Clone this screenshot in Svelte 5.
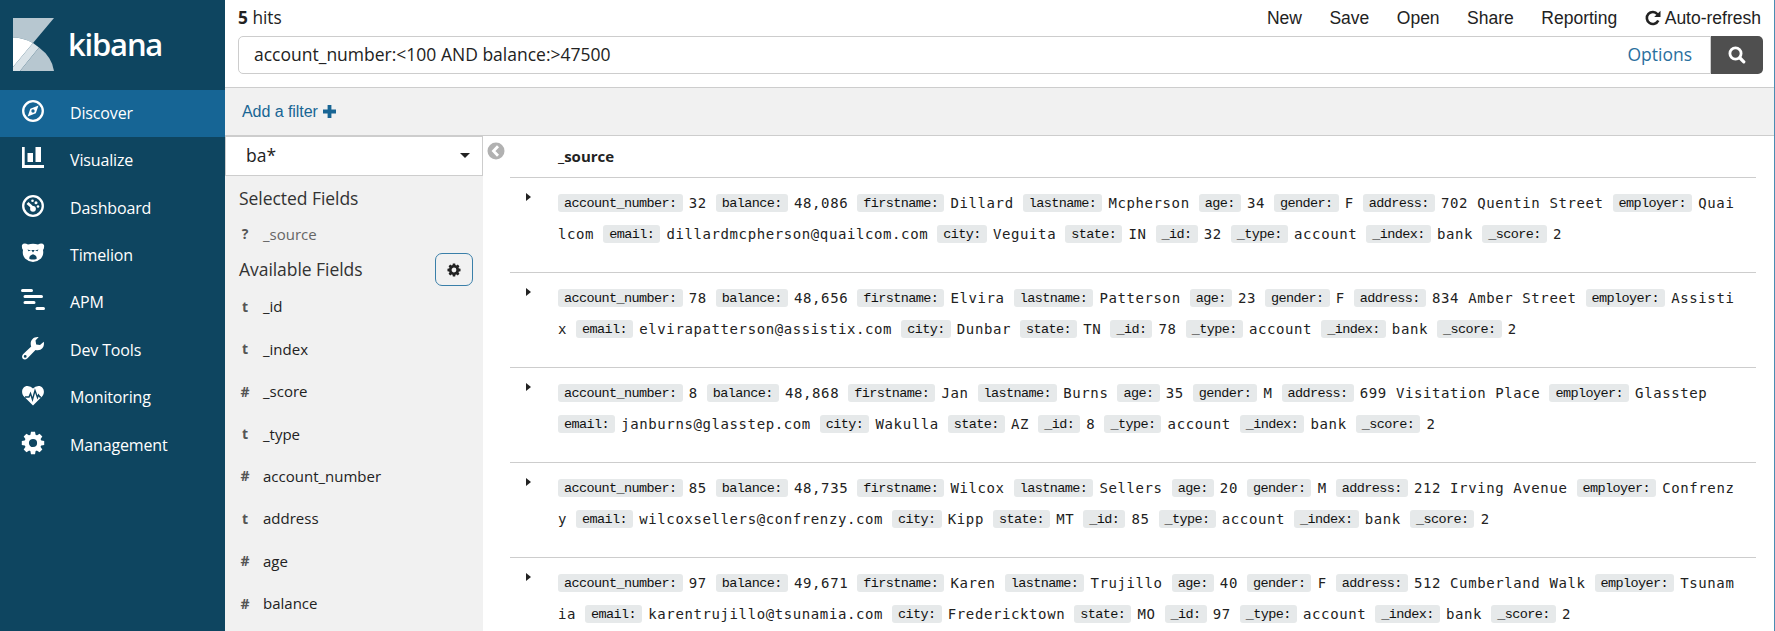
<script>
  const nav = [
    { label: 'Discover', icon: 'compass', active: true },
    { label: 'Visualize', icon: 'bars' },
    { label: 'Dashboard', icon: 'dash' },
    { label: 'Timelion', icon: 'bear' },
    { label: 'APM', icon: 'apm' },
    { label: 'Dev Tools', icon: 'wrench' },
    { label: 'Monitoring', icon: 'heart' },
    { label: 'Management', icon: 'gear' }
  ];
  const menu = ['New', 'Save', 'Open', 'Share', 'Reporting'];
  const fields = [
    ['t', '_id'], ['t', '_index'], ['#', '_score'], ['t', '_type'],
    ['#', 'account_number'], ['t', 'address'], ['#', 'age'], ['#', 'balance']
  ];
  // Each hit is two lines of [key, value] pairs; an empty key continues a wrapped value.
  const hit = (n, bal, first, last, age, g, addr, emp, rest, email, city, state) => [
    [['account_number:', n], ['balance:', bal], ['firstname:', first], ['lastname:', last], ['age:', age],
      ['gender:', g], ['address:', addr], ['employer:', emp]],
    [...(rest ? [['', rest]] : []), ['email:', email], ['city:', city], ['state:', state], ['_id:', n],
      ['_type:', 'account'], ['_index:', 'bank'], ['_score:', '2']]
  ];
  const hits = [
    hit('32', '48,086', 'Dillard', 'Mcpherson', '34', 'F', '702 Quentin Street', 'Quai', 'lcom', 'dillardmcpherson@quailcom.com', 'Veguita', 'IN'),
    hit('78', '48,656', 'Elvira', 'Patterson', '23', 'F', '834 Amber Street', 'Assisti', 'x', 'elvirapatterson@assistix.com', 'Dunbar', 'TN'),
    hit('8', '48,868', 'Jan', 'Burns', '35', 'M', '699 Visitation Place', 'Glasstep', '', 'janburns@glasstep.com', 'Wakulla', 'AZ'),
    hit('85', '48,735', 'Wilcox', 'Sellers', '20', 'M', '212 Irving Avenue', 'Confrenz', 'y', 'wilcoxsellers@confrenzy.com', 'Kipp', 'MT'),
    hit('97', '49,671', 'Karen', 'Trujillo', '40', 'F', '512 Cumberland Walk', 'Tsunam', 'ia', 'karentrujillo@tsunamia.com', 'Fredericktown', 'MO')
  ];
  const teeth = [0, 45, 90, 135, 180, 225, 270, 315];
</script>

{#snippet gear()}
  <circle cx="12" cy="12" r="6.3" fill="none" stroke="currentColor" stroke-width="4.4" />
  {#each teeth as a}
    <path d="M9.2 5 L10 .8 H14 L14.8 5Z" fill="currentColor" transform="rotate({a} 12 12)" />
  {/each}
{/snippet}

<div class="app">
  <nav>
    <div class="brand">
      <svg width="41" height="53" viewBox="0 0 41 53">
        <path d="M0 0H41L20 25Q10 19.500 0 19.500Z" fill="#b7c7d0" />
        <path d="M0 19.500Q10 19.500 20 25L0 49Z" fill="#fff" />
        <path d="M20 25L26 29.500L7 53H0V49Z" fill="#dae3e8" />
        <path d="M26 29.500Q39 39 41 53H7Z" fill="#b7c7d0" />
      </svg>
      <span>kibana</span>
    </div>
    {#each nav as item}
      <div class="item" class:active={item.active}>
        <svg width="24" height="24" viewBox="0 0 24 24">
          {#if item.icon === 'compass'}
            <circle cx="12" cy="12" r="9.800" fill="none" stroke="#fff" stroke-width="2.300" />
            <path fill="#fff" fill-rule="evenodd" d="M17.500 6.500L14.800 14.200L6.700 17.600L9.300 9.800ZM12 10.300A1.700 1.700 0 1 0 12 13.700A1.700 1.700 0 1 0 12 10.300Z" />
          {:else if item.icon === 'bars'}
            <path fill="#fff" d="M1 1H3.700V19H23V22H1ZM6.500 7H12V16H6.500ZM14.500 1H20V16H14.500Z" />
          {:else if item.icon === 'dash'}
            <circle cx="12" cy="12" r="9.800" fill="none" stroke="#fff" stroke-width="2.300" />
            <circle cx="12" cy="14.800" r="2.900" fill="#fff" />
            <path d="M6.500 9L12 14" stroke="#fff" stroke-width="2.800" />
            <circle cx="11.500" cy="6.800" r="1.300" fill="#fff" />
            <circle cx="15" cy="8.800" r="1.500" fill="#fff" />
            <circle cx="17" cy="12.500" r="1.300" fill="#fff" />
          {:else if item.icon === 'bear'}
            <path fill="#fff" d="M1 4Q3 1.500 7 3.500Q12 2 17 3.500Q21 1.500 23 4Q23.500 7 22 9Q23 14 20 17.500Q16 21 12 21Q8 21 4 17.500Q1 14 2 9Q.500 7 1 4Z" />
            <path fill="#0e4560" d="M6.500 8.500L10 9.500L7.500 10.300ZM17.500 8.500L14 9.500L16.500 10.300ZM10.300 9H13.700L12 11.500ZM12 13.300Q16.500 15 15.500 18Q12 19 8.500 18Q7.500 15 12 13.300Z" />
          {:else if item.icon === 'apm'}
            <path stroke="#fff" stroke-width="3" stroke-linecap="round" d="M1.500 2.500H10.500M4 8.500H20.500M4 14.500H13M16 20.500H22.500" />
          {:else if item.icon === 'wrench'}
            <path fill="#fff" fill-rule="evenodd" d="M17.700 1L14.500 4.500L15.200 8.500L19 9L22.800 5.700C23.800 11 20.500 15.500 14.500 14L6.500 22.300C2.800 25.500-.700 21.500 2 18.300L10.200 10.500C8.300 5 12 .300 17.700 1ZM4.200 19A1.400 1.400 0 1 0 4.200 21.800A1.400 1.400 0 1 0 4.200 19Z" />
          {:else if item.icon === 'heart'}
            <path fill="#fff" d="M12 22.500L2.500 13C-.500 9 1.500 3 6.500 3Q10 3 12 5.500Q14 3 17.500 3C22.500 3 24.500 9 21.500 13Z" />
            <path fill="none" stroke="#0e4560" stroke-width="1.400" d="M4 14H8L9.500 10.500L11.500 16.500L14 7.500L16.500 14.500L17.500 12L19 14H20" />
          {:else}
            {@render gear()}
          {/if}
        </svg>
        <span>{item.label}</span>
      </div>
    {/each}
  </nav>

  <main>
    <header>
      <div class="top">
        <div class="hits"><b>5</b> hits</div>
        <div class="menu">
          {#each menu as m}<span>{m}</span>{/each}
          <span class="auto">
            <svg width="16" height="16" viewBox="0 0 16 16"><path fill="none" stroke="#222" stroke-width="2.600" d="M13.300 10.500A6 6 0 1 1 12.500 4.200" /><path fill="#222" d="M15.500 .700V7H9.200Z" /></svg>Auto-refresh
          </span>
        </div>
      </div>
      <div class="search">
        <div class="query"><span>account_number:&lt;100 AND balance:&gt;47500</span><a>Options</a></div>
        <div class="go">
          <svg width="18" height="18" viewBox="0 0 18 18"><circle cx="7.500" cy="7.500" r="5.600" fill="none" stroke="#fff" stroke-width="2.800" /><path stroke="#fff" stroke-width="3.200" stroke-linecap="round" d="M12 12L15.800 15.800" /></svg>
        </div>
      </div>
    </header>
    <div class="filters">
      <span>Add a filter</span>
      <svg width="13" height="13" viewBox="0 0 13 13"><path fill="#186594" d="M4.600 0H8.400V4.600H13V8.400H8.400V13H4.600V8.400H0V4.600H4.600Z" /></svg>
    </div>
    <div class="content">
      <aside>
        <div class="select"><span>ba*</span><i></i></div>
        <h2>Selected Fields</h2>
        <div class="field selected"><b>?</b><span>_source</span></div>
        <div class="avail">
          <h2>Available Fields</h2>
          <div class="cog"><svg width="14" height="14" viewBox="0 0 24 24">{@render gear()}</svg></div>
        </div>
        {#each fields as [type, name]}
          <div class="field"><b>{type}</b><span>{name}</span></div>
        {/each}
      </aside>
      <div class="collapse">
        <svg width="18" height="18" viewBox="0 0 18 18"><circle cx="9" cy="9" r="8.500" fill="#b1b1b1" /><path fill="none" stroke="#fff" stroke-width="2.800" d="M11 4.300L6.500 9L11 13.700" /></svg>
      </div>
      <section>
        <div class="thead">_source</div>
        {#each hits as lines}
          <div class="hit">
            <i></i>
            <div class="source">
              {#each lines as line}
                <div class="line">
                  {#each line as [k, v]}{#if k}<span class="key">{k}</span>{/if}<span class="val">{v}</span>{/each}
                </div>
              {/each}
            </div>
          </div>
        {/each}
      </section>
    </div>
  </main>
</div>

<style>
  :global(body) { margin: 0; overflow: hidden; }
  .app { display: flex; box-sizing: border-box; width: 1775px; height: 631px; overflow: hidden; background: #fff; color: #222; font-family: "Open Sans", sans-serif; border-right: 1px solid #4b8cb2; }
  nav { width: 225px; flex: none; background: #0e4560; color: #fff; }
  .brand { height: 90px; box-sizing: border-box; padding: 18px 0 0 13px; display: flex; }
  .brand span { font-size: 31px; font-weight: 600; line-height: 53px; margin-left: 14px; letter-spacing: -1.200px; }
  .item { display: flex; align-items: center; box-sizing: border-box; height: 47.450px; padding: 0 0 2px 21px; font-size: 16px; letter-spacing: -.150px; }
  .item svg { margin: 0 25px 4px 0; }
  .active { background: #166595; }
  main { flex: 1; min-width: 0; display: flex; flex-direction: column; }
  header { height: 87px; border-bottom: 1px solid #cdcdcd; padding: 0 11px 0 13px; }
  .top { display: flex; justify-content: space-between; height: 36px; line-height: 36px; font-size: 17.300px; }
  .menu { display: flex; gap: 27.500px; font-family: "Liberation Sans", Arial, sans-serif; font-size: 17.500px; padding-right: 2px; }
  .auto { display: flex; align-items: center; gap: 4px; }
  .search { display: flex; height: 38px; }
  .query { flex: 1; box-sizing: border-box; border: 1px solid #cdcdcd; border-radius: 5px 0 0 5px; display: flex; justify-content: space-between; align-items: center; padding: 0 18px 2px 15px; font-size: 17.500px; }
  .query a { color: #2a6f9e; }
  .go { width: 52px; background: #4f4f4f; border-radius: 0 5px 5px 0; display: flex; align-items: center; justify-content: center; }
  .filters { height: 47px; border-bottom: 1px solid #cdcdcd; background: #f1f1f1; display: flex; align-items: center; gap: 5px; padding-left: 17px; color: #186594; font: 16px "Liberation Sans", Arial, sans-serif; letter-spacing: -.050px; }
  .content { flex: 1; display: flex; min-height: 0; }
  aside { width: 258px; background: #f1f1f1; }
  .select { height: 40px; box-sizing: border-box; border: 1px solid #cdcdcd; background: #fff; display: flex; align-items: center; justify-content: space-between; padding: 0 12px 2px 20px; font-size: 17.500px; }
  .select i { border: 5px solid transparent; border-top-color: #222; border-bottom: 0; }
  h2 { font-size: 17.500px; font-weight: 400; margin: 0; padding-left: 14px; line-height: 45px; color: #333; letter-spacing: -.050px; }
  .field { display: flex; align-items: center; height: 42.450px; padding-left: 14px; font-size: 15px; }
  .field b { width: 12px; text-align: center; margin-right: 12px; font-size: 14px; color: #555; }
  .selected { height: 25px; color: #666; }
  .avail { display: flex; justify-content: space-between; align-items: center; height: 47px; padding-right: 10px; margin-bottom: -8px; }
  .cog { box-sizing: border-box; width: 38px; height: 33px; border: 1.500px solid #3a7fa9; border-radius: 7px; display: flex; align-items: center; justify-content: center; }
  .collapse { width: 27px; padding: 6px 0 0 4px; box-sizing: border-box; }
  section { width: 1246px; }
  .collapse svg { display: block; margin-left: 0; }
  .thead { height: 41px; line-height: 41px; padding-left: 48px; font-size: 15px; font-weight: 700; }
  .hit { display: flex; height: 94px; border-top: 1px solid #cdcdcd; }
  .hit i { margin: 15px 27px 0 16px; border: 4.500px solid transparent; border-left: 5px solid #222; border-right: 0; height: 0; }
  .source { padding-top: 9px; }
  .line { display: flex; align-items: center; height: 31px; white-space: pre; }
  .key { background: #e6e9ea; color: #111; border-radius: 3px; padding: 0 6px; height: 18px; line-height: 19px; font-family: "Liberation Mono", monospace; font-size: 13.500px; letter-spacing: -.600px; margin-right: 6.200px; }
  .val { font-family: "DejaVu Sans Mono", monospace; font-size: 14px; letter-spacing: .600px; margin-right: 9.050px; }
</style>
